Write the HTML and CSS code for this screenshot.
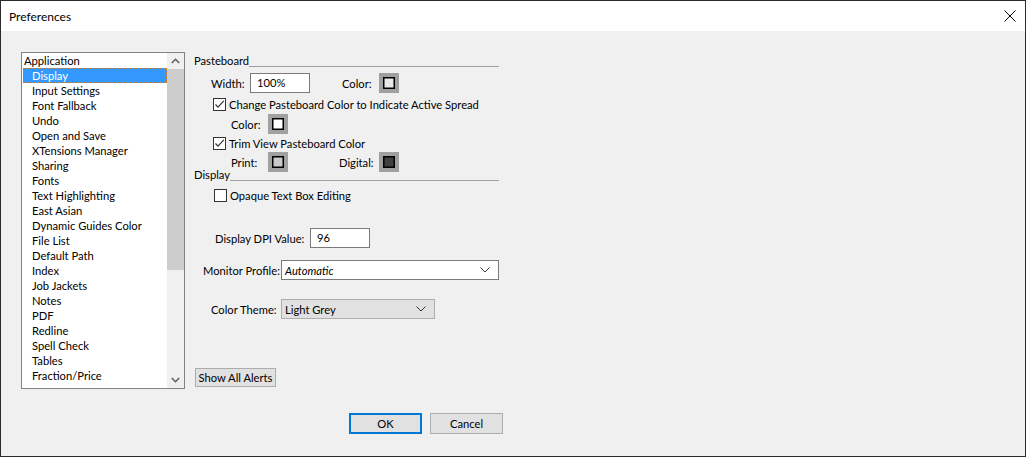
FILE: index.html
```html
<!DOCTYPE html>
<html lang="en">
<head>
  <meta charset="UTF-8" />
  <title>Preferences</title>
  <link rel="stylesheet" href="styles.css">
</head>
<body>
  <div class="window">
    <div class="titlebar">
      <span class="title">Preferences</span>
      <svg class="close" width="12" height="12" viewBox="0 0 12 12"><path d="M0.5 0.5 L11.5 11.5 M11.5 0.5 L0.5 11.5" stroke="#000" stroke-width="1" fill="none"/></svg>
    </div>

    <div class="content">
      <div class="listbox">
        <ul class="items">
          <li>Application</li>
          <li class="child selected">Display</li>
          <li class="child">Input Settings</li>
          <li class="child">Font Fallback</li>
          <li class="child">Undo</li>
          <li class="child">Open and Save</li>
          <li class="child">XTensions Manager</li>
          <li class="child">Sharing</li>
          <li class="child">Fonts</li>
          <li class="child">Text Highlighting</li>
          <li class="child">East Asian</li>
          <li class="child">Dynamic Guides Color</li>
          <li class="child">File List</li>
          <li class="child">Default Path</li>
          <li class="child">Index</li>
          <li class="child">Job Jackets</li>
          <li class="child">Notes</li>
          <li class="child">PDF</li>
          <li class="child">Redline</li>
          <li class="child">Spell Check</li>
          <li class="child">Tables</li>
          <li class="child">Fraction/Price</li>
        </ul>
        <div class="scrollbar">
          <div class="arrow"><svg width="9" height="6" viewBox="0 0 9 6"><path d="M0.8 5 L4.5 1.3 L8.2 5" stroke="#606060" stroke-width="1.6" fill="none"/></svg></div>
          <div class="thumb"></div>
          <div class="track"></div>
          <div class="arrow"><svg width="9" height="6" viewBox="0 0 9 6"><path d="M0.8 1 L4.5 4.7 L8.2 1" stroke="#606060" stroke-width="1.6" fill="none"/></svg></div>
        </div>
      </div>

      <div class="panel">
        <div class="section-head">Pasteboard</div>

        <div class="row row-width">
          <span class="label w-width">Width:</span>
          <div class="field w60">100%</div>
          <span class="label w-color1">Color:</span>
          <div class="swatch"><span class="chip light"></span></div>
        </div>

        <div class="check-row row-check1">
          <span class="checkbox checked"><svg width="11" height="11" viewBox="0 0 11 11"><path d="M1.5 5.5 L4 8.2 L9.8 1.8" stroke="#333" stroke-width="1.2" fill="none"/></svg></span>
          <span>Change Pasteboard Color to Indicate Active Spread</span>
        </div>

        <div class="row row-color2">
          <span class="label w-sub">Color:</span>
          <div class="swatch"><span class="chip white"></span></div>
        </div>

        <div class="check-row row-check2">
          <span class="checkbox checked"><svg width="11" height="11" viewBox="0 0 11 11"><path d="M1.5 5.5 L4 8.2 L9.8 1.8" stroke="#333" stroke-width="1.2" fill="none"/></svg></span>
          <span>Trim View Pasteboard Color</span>
        </div>

        <div class="row row-print">
          <span class="label w-sub">Print:</span>
          <div class="swatch"><span class="chip grey"></span></div>
          <span class="label w-digital">Digital:</span>
          <div class="swatch"><span class="chip dark"></span></div>
        </div>

        <div class="section-head head-display">Display</div>

        <div class="check-row row-opaque">
          <span class="checkbox"></span>
          <span>Opaque Text Box Editing</span>
        </div>

        <div class="row row-dpi">
          <span class="label w-dpi">Display DPI Value:</span>
          <div class="field w60">96</div>
        </div>

        <div class="row row-monitor">
          <span class="label w-monitor">Monitor Profile:</span>
          <div class="select wide">
            <em>Automatic</em>
            <svg width="10" height="6" viewBox="0 0 10 6"><path d="M0.5 0.5 L5 5 L9.5 0.5" stroke="#333" stroke-width="1" fill="none"/></svg>
          </div>
        </div>

        <div class="row row-theme">
          <span class="label w-theme">Color Theme:</span>
          <div class="select grey-select">
            <span>Light Grey</span>
            <svg width="10" height="6" viewBox="0 0 10 6"><path d="M0.5 0.5 L5 5 L9.5 0.5" stroke="#333" stroke-width="1" fill="none"/></svg>
          </div>
        </div>

        <button class="btn alerts">Show All Alerts</button>
      </div>
    </div>

    <div class="footer">
      <button class="btn dialog-btn default">OK</button>
      <button class="btn dialog-btn">Cancel</button>
    </div>
  </div>
</body>
</html>
```

FILE: styles.css
```css
* {
  box-sizing: border-box;
}
body {
  margin: 0;
  font-family: Lato, 'Noto Sans', sans-serif;
  font-size: 11.2px;
  color: #000;
  background: #f0f0f0;
}
.window {
  width: 1026px;
  height: 457px;
  border: 1px solid #2b2b2b;
  background: #f0f0f0;
  overflow: hidden;
}
.titlebar {
  height: 30px;
  background: #fff;
  display: flex;
  align-items: center;
  justify-content: space-between;
  padding: 0 9px 0 8px;
}
.title {
  font-size: 12px;
}

.content {
  display: flex;
  padding: 21px 0 0 20px;
  height: 358px;
}

/* left list */
.listbox {
  width: 164px;
  height: 337px;
  border: 1px solid #828282;
  background: #fff;
  display: flex;
  overflow: hidden;
}
.items {
  list-style: none;
  margin: 0;
  padding: 0;
  flex: 1;
  overflow: hidden;
}
.items li {
  height: 15px;
  line-height: 15px;
  padding-left: 2px;
  white-space: nowrap;
}
.items li.child {
  padding-left: 10px;
}
.items li.selected {
  background: #3399ff;
  color: #fff;
  margin-left: 1px;
  padding-left: 9px;
  outline: 1px dashed #cc7a29;
  outline-offset: -1px;
}
.scrollbar {
  width: 17px;
  flex-shrink: 0;
  background: #f0f0f0;
  display: flex;
  flex-direction: column;
}
.arrow {
  height: 16px;
  display: flex;
  align-items: center;
  justify-content: center;
}
.thumb {
  height: 201px;
  background: #cdcdcd;
}
.track {
  flex: 1;
}

/* right panel */
.panel {
  width: 305px;
  margin-left: 9px;
  display: flex;
  flex-direction: column;
  align-items: flex-start;
  white-space: nowrap;
}
.section-head {
  display: flex;
  align-items: flex-end;
  width: 100%;
  height: 14px;
  line-height: 14px;
  margin-top: 2px;
}
.section-head::after {
  content: '';
  flex: 1;
  border-bottom: 1px solid #a0a0a0;
  margin-bottom: 1px;
}
.row {
  display: flex;
  align-items: center;
  height: 20px;
}
.row > * {
  flex-shrink: 0;
}
.label {
  white-space: nowrap;
}
.w-width { margin-left: 17px; width: 39px; }
.w-color1 { margin-left: 32px; width: 37px; }
.w-sub { margin-left: 37px; width: 37px; }
.w-digital { margin-left: 51px; width: 40px; }
.w-dpi { margin-left: 21px; width: 95px; }
.w-monitor { margin-left: 9px; width: 78px; }
.w-theme { margin-left: 17px; width: 70px; }

.row-width { margin-top: 5px; }
.row-color2 { margin-top: 2px; }
.row-print { margin-top: 1px; }
.head-display { margin-top: -4px; }
.row-dpi { margin-top: 25px; }
.row-monitor { margin-top: 12px; }
.row-theme { margin-top: 19px; }

.field {
  height: 20px;
  background: #fff;
  border: 1px solid #7a7a7a;
  padding: 0 0 0 6px;
  line-height: 18px;
}
.w60 { width: 60px; }

.swatch {
  width: 20px;
  height: 20px;
  background: #a0a0a0;
  display: flex;
  align-items: center;
  justify-content: center;
}
.chip {
  width: 12px;
  height: 12px;
  border: 1px solid #000;
  box-shadow: inset 0 0 0 0.5px #000;
}
.chip.light { background: #e8e8e8; }
.chip.white { background: #fff; }
.chip.grey { background: #c8c8c8; }
.chip.dark { background: #404040; }

.check-row {
  display: flex;
  align-items: center;
  height: 15px;
  margin-left: 19px;
  margin-top: 4px;
}
.check-row.row-check2 { margin-top: 2px; }
.check-row.row-opaque { margin-left: 20px; margin-top: 6px; }
.checkbox {
  width: 13px;
  height: 13px;
  flex-shrink: 0;
  border: 1px solid #333;
  background: #fff;
  margin-right: 3px;
  display: flex;
  align-items: center;
  justify-content: center;
}

.select {
  height: 20px;
  border: 1px solid #7a7a7a;
  background: #fff;
  display: flex;
  align-items: center;
  justify-content: space-between;
  padding: 0 8px 0 3px;
}
.select.wide { width: 218px; }
.select.grey-select {
  width: 154px;
  background: #e1e1e1;
  border-color: #adadad;
}
.select em { font-style: italic; }

.btn {
  font-family: inherit;
  font-size: 11.2px;
  color: #000;
  background: #e1e1e1;
  border: 1px solid #adadad;
  padding: 0;
  border-radius: 0;
  white-space: nowrap;
}
.alerts {
  height: 19px;
  width: 81px;
  margin-top: 49px;
  margin-left: 1px;
}
.footer {
  display: flex;
  gap: 8px;
  padding-left: 348px;
  margin-top: 24px;
}
.dialog-btn {
  width: 73px;
  height: 21px;
}
.dialog-btn.default {
  border: 2px solid #0078d7;
}
```
